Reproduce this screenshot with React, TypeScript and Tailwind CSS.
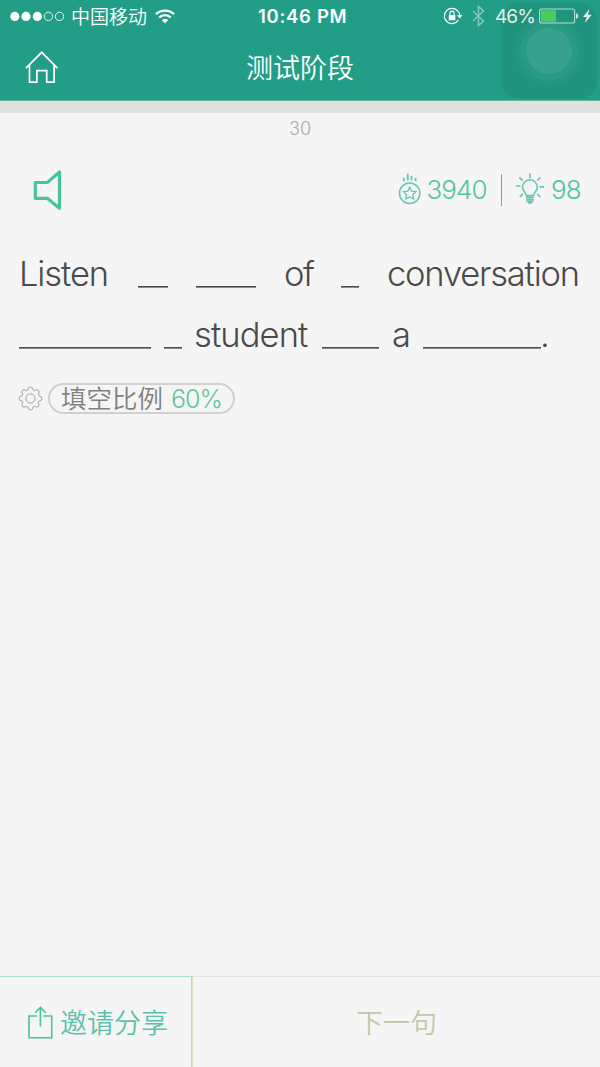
import React from "react";

type WordProps = {
  text: string;
  className: string;
};

type BlankProps = {
  className: string;
};

const Word = ({ text, className }: WordProps) => (
  <span className={`block whitespace-nowrap ${className}`}>{text}</span>
);

// An empty slot the learner has to fill in
const Blank = ({ className }: BlankProps) => (
  <span className={`mt-[33px] block h-[2px] border-t border-[#4a4a4a] bg-[#8a8a8a] ${className}`} />
);

const StatusBar = () => (
  <div className="flex h-8 items-center text-white">
    <div className="flex w-[258px] items-center pl-[10px]">
      <svg width="54" height="12" viewBox="0 0 54 12" fill="none" stroke="white">
        <circle cx="4.8" cy="6.4" r="4.6" fill="white" stroke="none" />
        <circle cx="16" cy="6.4" r="4.6" fill="white" stroke="none" />
        <circle cx="27.3" cy="6.4" r="4.6" fill="white" stroke="none" />
        <circle cx="38.4" cy="6.4" r="4.2" strokeWidth="0.9" />
        <circle cx="49.5" cy="6.4" r="4.2" strokeWidth="0.9" />
      </svg>
      <span className="ml-[7px] pt-1 text-[19px] leading-7 font-[350]">中国移动</span>
      <svg className="ml-2" width="20" height="15" viewBox="0 0 20 15" fill="none" stroke="white">
        <path d="M1 5.2C6 .4 14 .4 19 5.2" strokeWidth="2.3" />
        <path d="M4.2 8.5c3.3-3.1 8.3-3.1 11.6 0" strokeWidth="2.3" />
        <path d="M6.8 11.1c1.8-1.6 4.6-1.6 6.4 0L10 14.5z" fill="white" stroke="none" />
      </svg>
    </div>
    <span className="w-[185px] text-[18.5px] leading-8 font-semibold tracking-[0.7px]">10:46 PM</span>
    <div className="flex items-center">
      <svg width="20" height="18" viewBox="0 0 20 18" fill="none" stroke="white">
        <path d="M14.8 4.1A7.6 7.6 0 1 0 15.4 13M14.8 4.1Q17 6 17 9" strokeWidth="1.2" />
        <path d="M13.8 8.2h5.8L16.7 11.6z" fill="white" stroke="none" />
        <rect x="5.8" y="8" width="6.5" height="5.2" fill="white" stroke="none" />
        <path d="M7 8V6.2a2 2 0 0 1 4.1 0V8" strokeWidth="1.1" />
      </svg>
      <svg className="ml-[9px] opacity-45" width="13" height="22" viewBox="0 0 13 22" fill="none" stroke="white" strokeWidth="1.5">
        <path d="M1 6l10.5 10L6.5 20.5V1.5L11.5 6 1 16" />
      </svg>
      <span className="ml-[10px] w-[44px] pt-px text-[19px] leading-8 tracking-[-0.9px] text-[#e3f0ed]">46%</span>
      <svg width="55" height="16" viewBox="0 0 55 16" fill="none">
        <rect x=".6" y="1" width="35" height="14" rx="2" stroke="#b9ddd3" strokeWidth="1.1" />
        <rect x="2" y="2.3" width="15" height="11.4" fill="#4ccb5c" />
        <path d="M37 5.3q2.3.2 2.3 2.7T37 10.7z" fill="#d8ebe6" />
        <path d="M50.5 1l-6.4 8h3.7l-2 6 7-8.2h-4z" fill="#e9f4f1" />
      </svg>
    </div>
  </div>
);

const App = () => {
  return (
    <div className="flex h-[1067px] w-[600px] flex-col overflow-hidden bg-[#f5f5f5] font-['Inter','Noto_Sans_CJK_SC',sans-serif]">
      <header className="relative h-[101px] shrink-0 border-b border-[#5fb5a0] bg-[#219e85]">
        {/* Floating touch button */}
        <div className="absolute top-[3px] left-[501px] flex size-24 items-center justify-center rounded-[18px] bg-[#1f937b]">
          <div className="flex size-[70px] items-center justify-center rounded-full bg-[#23967e]">
            <div className="flex size-[59px] items-center justify-center rounded-full bg-[#299a83]">
              <div className="size-[46px] rounded-full bg-[#38a18c]" />
            </div>
          </div>
        </div>
        <div className="relative">
          <StatusBar />
          <div className="grid h-[70px] grid-cols-[1fr_auto_1fr] items-center">
            <svg className="ml-[25px]" width="34" height="34" viewBox="0 0 34 34" fill="none" stroke="white" strokeWidth="1.7">
              <path d="M1 18.2L16.7 2.3 32.4 18.2" />
              <path d="M4.5 15.2v17h7.4V20.7h9.8v11.5h7.4v-17" />
            </svg>
            <h1 className="pt-1 text-[27px] leading-10 font-[350] text-white">测试阶段</h1>
          </div>
        </div>
      </header>
      <div className="h-3 shrink-0 bg-[#e0e0e0]" />

      <main className="flex flex-1 flex-col">
        <div className="h-[30px] pt-px text-center text-[18px] leading-[30px] font-light text-[#aaa]">30</div>

        <div className="mt-6 flex h-[46px] items-center justify-between pr-[19px] pl-[33px]">
          <svg width="30" height="42" viewBox="0 0 30 42" fill="none" stroke="#48c49a" strokeWidth="3.2" strokeLinejoin="round">
            <path d="M2.3 13.5h12L26.5 3v36.2L14.3 29.3h-12z" />
          </svg>
          <div className="flex items-center text-[26px] leading-10 font-light text-[#50c5a0]">
            <svg className="-mt-[3px]" width="24" height="32" viewBox="0 0 24 32" fill="none" stroke="#62c6b0" strokeWidth="1.5">
              <circle cx="11.7" cy="20.3" r="10.2" />
              <path d="M11.7 14.2l1.9 3.9 4.3.6-3.1 3 .8 4.2-3.9-2-3.8 2 .7-4.2-3.1-3 4.3-.6z" strokeWidth="1.3" />
              <path d="M5.8 4.8v3.4M9.8 .8v6.6M13.5 2.8v4.6M17.6 4.8v3.4" strokeWidth="1.8" />
            </svg>
            <span className="ml-[5px] w-[61px] tracking-[-0.9px]">3940</span>
            <span className="ml-[13px] h-8 w-[1.5px] bg-[#939c98]" />
            <svg className="-mt-[2px] ml-[13px]" width="31" height="32" viewBox="0 0 31 32" fill="none" stroke="#62c6b0" strokeWidth="1.5">
              <path d="M11.3 22.4c0-2.6-3.8-4-3.8-8.2a7.4 7.4 0 0 1 14.8 0c0 4.2-3.8 5.6-3.8 8.2z" />
              <path d="M11 24.2h7.8M11 26.4h7.8M11.4 28.4h7M13 30h3.8" strokeWidth="1.7" />
              <path d="M15 .6v4.6M4.3 4.5l3.3 3M25.5 4.5l-3.2 3M.8 13h4.7M24.5 13.8h4.7M8 21l-3.2 2.8M22.2 21.2l3.1 2.6" strokeWidth="1.7" />
            </svg>
            <span className="ml-[5px] w-[30px] tracking-[-0.9px]">98</span>
          </div>
        </div>

        {/* Sentence with blanks */}
        <div className="mt-10 pl-[19px] text-[34.5px] leading-[42px] font-light text-[#4a4a4a]">
          <div className="flex h-[61px] items-start">
            <Word text="Listen" className="mr-[29px] w-[90px] tracking-[-1.1px]" />
            <Blank className="mr-7 w-[30px]" />
            <Blank className="mr-7 w-[60px]" />
            <Word text="of" className="mr-7 w-[29px] tracking-[-1.5px]" />
            <Blank className="mr-7 w-[18px]" />
            <Word text="conversation" className="w-[193px] tracking-[-1.2px]" />
          </div>
          <div className="flex h-[61px] items-start">
            <Blank className="mr-[13px] w-[132px]" />
            <Blank className="mr-3 w-[18px]" />
            <Word text="student" className="mr-3 w-[116px] tracking-[-0.9px]" />
            <Blank className="mr-[13px] w-[57px]" />
            <Word text="a" className="mr-3 w-[19px]" />
            <Blank className="w-[118px]" />
            <Word text="." className="-ml-px w-2" />
          </div>
        </div>

        <div className="mt-2 flex items-center pl-[18px]">
          <svg width="25" height="25" viewBox="0 0 25 25" fill="none" stroke="#a2a2a2" strokeWidth="1">
            <path d="M10 3.8Q10.2 1 12.5 1T15 3.8l1.8.8q2.1-1.8 3.7-.2t-.2 3.7l.8 1.9q2.9.2 2.9 2.5T21.1 15l-.8 1.8q1.8 2.1.2 3.7t-3.7-.2l-1.8.8q-.2 2.9-2.5 2.9T10 21.1l-1.8-.8q-2.1 1.8-3.7.2t.2-3.7L3.9 15Q1 14.8 1 12.5T3.9 10l.8-1.9q-1.8-2.1-.2-3.7t3.7.2z" />
            <circle cx="12.5" cy="12.5" r="4.6" />
          </svg>
          <button
            type="button"
            className="ml-[5px] flex h-[31px] w-[187px] items-center rounded-full border-2 border-[#d0d0d0] pl-[11px] whitespace-nowrap"
          >
            <span className="text-[25.5px] leading-[28px] font-[350] text-[#80807c]">填空比例</span>
            <span className="ml-2 text-[25px] leading-[28px] font-[350] tracking-[-1px] text-[#58c79b]">60%</span>
          </button>
        </div>
      </main>

      <footer className="flex h-[91px] shrink-0 text-[27px] leading-10">
        <button
          type="button"
          className="flex w-[192px] items-center border-t border-r border-t-[#a9dccb] border-r-[#bcd8c4] pl-[27px] text-[#5bc1ad]"
        >
          <svg width="26" height="34" viewBox="0 0 26 34" fill="none" stroke="#48c49a" strokeWidth="1.6">
            <path d="M10 11H2v21.7h22.7V11H16.4" />
            <path d="M13.4 21.5V2.5M8.2 7.8L13.4 2.5l5.2 5.3" />
          </svg>
          <span className="ml-[7px] pt-[3px] font-[350]">邀请分享</span>
        </button>
        <button
          type="button"
          className="flex flex-1 items-center justify-center border-t border-l border-t-[#e2e4da] border-l-[#e0dfc9] pt-[3px] font-[350] text-[#c2c7a9]"
        >
          下一句
        </button>
      </footer>
    </div>
  );
};

export default App;
